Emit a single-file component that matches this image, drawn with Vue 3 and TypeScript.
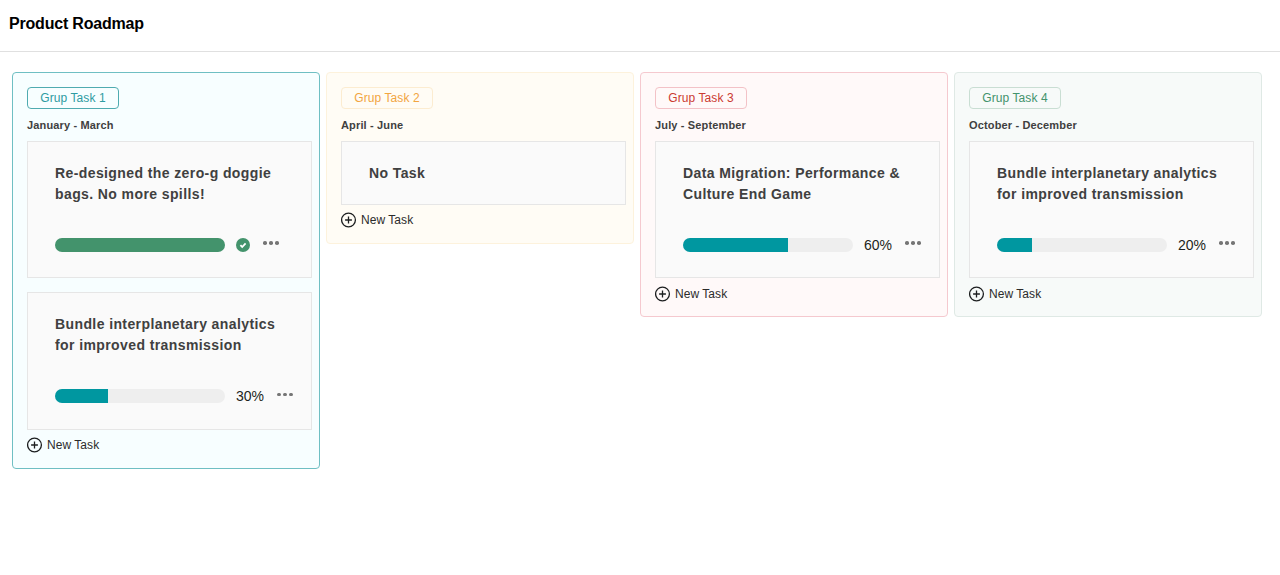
<script setup lang="ts">
interface Task {
  title: string
  progress: number
}
interface Group {
  name: string
  period: string
  theme: string
  tasks: Task[]
}

const groups: Group[] = [
  {
    name: 'Grup Task 1',
    period: 'January - March',
    theme: 'teal',
    tasks: [
      { title: 'Re-designed the zero-g doggie bags. No more spills!', progress: 100 },
      { title: 'Bundle interplanetary analytics for improved transmission', progress: 30 },
    ],
  },
  { name: 'Grup Task 2', period: 'April - June', theme: 'amber', tasks: [] },
  {
    name: 'Grup Task 3',
    period: 'July - September',
    theme: 'red',
    tasks: [{ title: 'Data Migration: Performance & Culture End Game', progress: 60 }],
  },
  {
    name: 'Grup Task 4',
    period: 'October - December',
    theme: 'green',
    tasks: [{ title: 'Bundle interplanetary analytics for improved transmission', progress: 20 }],
  },
]
</script>

<template>
  <div class="page">
    <header class="header">Product Roadmap</header>
    <main class="board">
      <section v-for="group in groups" :key="group.name" class="group" :class="group.theme">
        <span class="badge">{{ group.name }}</span>
        <div class="period">{{ group.period }}</div>
        <article v-for="task in group.tasks" :key="task.title" class="card">
          <h3 class="title">{{ task.title }}</h3>
          <div class="progress-row">
            <div class="track">
              <div
                class="fill"
                :class="{ done: task.progress === 100 }"
                :style="{ width: `${task.progress * 1.75}px` }"
              />
            </div>
            <svg v-if="task.progress === 100" class="check" viewBox="0 0 14 14" width="14" height="14">
              <circle cx="7" cy="7" r="7" fill="#43936c" />
              <path d="M4.4 7.2 6.2 9 9.6 5.4" fill="none" stroke="#fff" stroke-width="1.8" />
            </svg>
            <span v-else class="percent">{{ task.progress }}%</span>
            <span class="more"><i /><i /><i /></span>
          </div>
        </article>
        <article v-if="!group.tasks.length" class="card empty">
          <h3 class="title">No Task</h3>
        </article>
        <div class="new-task">
          <svg viewBox="0 0 16 16" width="16" height="16">
            <circle cx="7.5" cy="8" r="6.9" fill="none" stroke="#1d1f20" stroke-width="1.3" />
            <path d="M7.5 4.6v6.8M4.1 8h6.8" fill="none" stroke="#1d1f20" stroke-width="1.3" />
          </svg>
          <span>New Task</span>
        </div>
      </section>
    </main>
  </div>
</template>

<style scoped>
.page {
  font-family: "Liberation Sans", Arial, sans-serif;
  color: #1d1f20;
}

.header {
  height: 51px;
  padding-left: 9px;
  border-bottom: 1px solid #e0e0e0;
  font-size: 16px;
  font-weight: 700;
  line-height: 47px;
  letter-spacing: -0.2px;
  color: #000;
}

.board {
  display: flex;
  align-items: flex-start;
  gap: 6px;
  padding: 20px 12px 0;
}

.group {
  width: 308px;
  box-sizing: border-box;
  padding: 14px 7px 14px 14px;
  border: 1px solid;
  border-radius: 4px;
  flex: none;
}

.badge {
  display: block;
  width: 92px;
  height: 22px;
  box-sizing: border-box;
  border: 1px solid;
  border-radius: 4px;
  font-size: 12px;
  line-height: 21px;
  letter-spacing: 0.1px;
  text-align: center;
}

.period {
  margin: 10px 0 8.75px;
  font-size: 11px;
  font-weight: 700;
  line-height: 13px;
  letter-spacing: 0.15px;
  color: #404040;
}

.teal {
  background: #f7feff;
  border-color: #6fbfc3;
}
.teal .badge {
  color: #2e9ca2;
  border-color: #4fabb0;
}

.amber {
  background: #fffcf5;
  border-color: #fdf2dc;
}
.amber .badge {
  color: #f2a541;
  border-color: #fcecd0;
}

.red {
  background: #fff9f9;
  border-color: #f5c9cf;
}
.red .badge {
  color: #cb3a31;
  border-color: #f3c2c7;
}

.green {
  background: #f7faf9;
  border-color: #dfe9e5;
}
.green .badge {
  color: #43936c;
  border-color: #c9ded3;
}

.card {
  height: 137.5px;
  box-sizing: border-box;
  margin-bottom: 14px;
  padding: 21px 27px 0;
  background: #fafafa;
  border: 1px solid #e6e6e6;
}

.card.empty {
  height: 64px;
}

.card:has(+ .new-task) {
  margin-bottom: 7px;
}

.title {
  margin: 0;
  min-height: 42px;
  font-size: 14px;
  font-weight: 700;
  line-height: 21px;
  letter-spacing: 0.4px;
  color: #404040;
}

.empty .title {
  min-height: 0;
}

.progress-row {
  display: flex;
  align-items: center;
  height: 16px;
  margin-top: 32px;
}

.track {
  width: 170px;
  height: 14px;
  flex: none;
  overflow: hidden;
  border-radius: 7px;
  background: #eeeeee;
}

.fill {
  height: 100%;
  background: #0097a0;
}

.fill.done {
  background: #43936c;
}

.check {
  margin-left: 11px;
  flex: none;
}

.percent {
  margin-left: 11px;
  font-size: 14px;
  line-height: 16px;
  color: #1d1f20;
}

.more {
  display: flex;
  gap: 2.5px;
  margin-left: 13px;
  position: relative;
  top: -2px;
}

.more i {
  width: 3.5px;
  height: 3.5px;
  border-radius: 50%;
  background: #757575;
}

.new-task {
  display: flex;
  align-items: center;
  gap: 4px;
  height: 17px;
  font-size: 12px;
  letter-spacing: 0.05px;
  color: #2b2b2b;
}
</style>
